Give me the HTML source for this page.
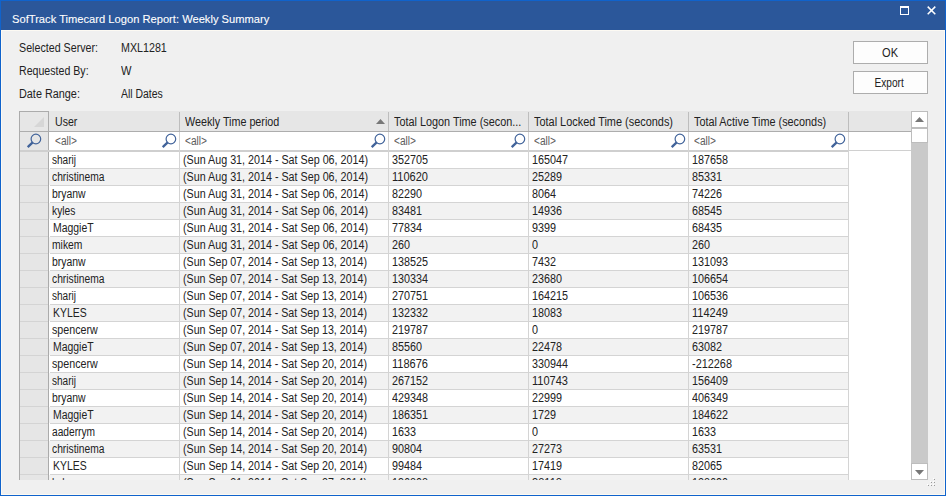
<!DOCTYPE html>
<html><head><meta charset="utf-8"><title>SofTrack Timecard Logon Report: Weekly Summary</title>
<style>
html,body{margin:0;padding:0;}
body{width:946px;height:496px;overflow:hidden;background:#f0f0f0;font-family:"Liberation Sans",sans-serif;font-size:12.5px;color:#222;position:relative;}
.abs{position:absolute;}
.t{display:inline-block;transform-origin:0 50%;white-space:nowrap;}
#frame{left:0;top:0;width:944px;height:494px;border:1px solid #1063cc;box-sizing:content-box;pointer-events:none;z-index:50;}
#inner{left:1px;top:30px;width:942px;height:463px;border:1px solid #fdfaf3;z-index:49;pointer-events:none;}
#title{left:1px;top:1px;width:944px;height:29px;background:#2b579a;}
#title .t{position:absolute;left:11px;top:10px;font-size:11.6px;color:#fff;line-height:16px;-webkit-text-stroke:0.1px #fff;}
.lbl{white-space:nowrap;line-height:14px;}
.btn{box-sizing:border-box;width:75px;height:23px;left:853px;border:1px solid #adadad;background:#fdfdfd;text-align:center;line-height:22px;}
.btn .t{transform-origin:50% 50%;}
#grid{left:19px;top:111px;width:909px;height:369px;overflow:hidden;background:#fff;}
.cell{position:absolute;white-space:nowrap;overflow:hidden;height:16px;line-height:16px;}
.cell i{position:absolute;left:3px;top:-0.5px;font-style:normal;}
.hl{position:absolute;height:1px;background:#d4d4d4;}
.vl{position:absolute;width:1px;background:#d4d4d4;}
.hdr{position:absolute;top:1.5px;height:19px;line-height:19px;white-space:nowrap;overflow:hidden;}
.flt{position:absolute;top:21px;height:18px;line-height:18px;color:#5c5c5c;}
.mag{position:absolute;width:16px;height:16px;}
</style></head><body>
<div id="title" class="abs"><span class="t" style="transform:scaleX(0.9624)">SofTrack Timecard Logon Report: Weekly Summary</span>
<div class="abs" style="left:899px;top:5px;width:9px;height:9px;box-sizing:border-box;border:1px solid #fff;border-top-width:2px;"></div>
<svg class="abs" style="left:926px;top:5px" width="10" height="10" viewBox="0 0 10 10"><path d="M0.7 0.6 L8.3 8.2 M8.3 0.6 L0.7 8.2" stroke="#fff" stroke-width="1.5" fill="none"/></svg>
</div>
<div class="abs lbl" style="left:19px;top:41px"><span class="t" style="transform:scaleX(0.8549)">Selected Server:</span></div>
<div class="abs lbl" style="left:121px;top:41px"><span class="t" style="transform:scaleX(0.8559)">MXL1281</span></div>
<div class="abs lbl" style="left:19px;top:64px"><span class="t" style="transform:scaleX(0.8488)">Requested By:</span></div>
<div class="abs lbl" style="left:121px;top:64px"><span class="t" style="transform:scaleX(0.89)">W</span></div>
<div class="abs lbl" style="left:19px;top:87px"><span class="t" style="transform:scaleX(0.8677)">Date Range:</span></div>
<div class="abs lbl" style="left:121px;top:87px"><span class="t" style="transform:scaleX(0.8357)">All Dates</span></div>
<div class="abs btn" style="top:41px"><span class="t" style="transform:scaleX(0.8859)">OK</span></div>
<div class="abs btn" style="top:71px;text-indent:-1px"><span class="t" style="transform:scaleX(0.8082)">Export</span></div>

<div id="grid" class="abs">
<div class="abs" style="left:0;top:0;width:892px;height:20px;background:#e6e6e6;"></div>
<div class="abs" style="left:0;top:0;width:30px;height:369px;background:#e6e6e6;"></div>
<div class="abs" style="left:0;top:0;width:30px;height:1px;background:#ababab;"></div>
<div class="abs" style="left:0;top:0;width:1px;height:369px;background:#ababab;"></div>
<div class="abs" style="left:29px;top:0;width:1px;height:369px;background:#ababab;"></div>
<svg class="abs" style="left:15px;top:6px" width="11" height="11" viewBox="0 0 11 11"><path d="M10 0 L10 10 L0 10 Z" fill="#d6d6d6"/></svg>
<div class="abs" style="left:0;top:20px;width:892px;height:1px;background:#adadad;"></div>
<div class="abs" style="left:30px;top:21px;width:862px;height:18px;background:#fff;"></div>
<div class="abs" style="left:1px;top:39px;width:829px;height:2px;background:#cfcfcf;"></div>
<div class="abs" style="left:830px;top:39px;width:62px;height:1px;background:#d0d0d0;"></div>
<div class="hdr" style="left:36px;width:122px"><span class="t" style="transform:scaleX(0.8449)">User</span></div>
<div class="flt" style="left:36px"><span class="t" style="transform:scaleX(0.8116)">&lt;all&gt;</span></div>
<div class="hdr" style="left:166px;width:200px"><span class="t" style="transform:scaleX(0.8609)">Weekly Time period</span></div>
<div class="flt" style="left:166px"><span class="t" style="transform:scaleX(0.8116)">&lt;all&gt;</span></div>
<div class="hdr" style="left:375px;width:131px"><span class="t" style="transform:scaleX(0.8683)">Total Logon Time (secon...</span></div>
<div class="flt" style="left:375px"><span class="t" style="transform:scaleX(0.8116)">&lt;all&gt;</span></div>
<div class="hdr" style="left:515px;width:151px"><span class="t" style="transform:scaleX(0.8736)">Total Locked Time (seconds)</span></div>
<div class="flt" style="left:515px"><span class="t" style="transform:scaleX(0.8116)">&lt;all&gt;</span></div>
<div class="hdr" style="left:675px;width:151px"><span class="t" style="transform:scaleX(0.8689)">Total Active Time (seconds)</span></div>
<div class="flt" style="left:675px"><span class="t" style="transform:scaleX(0.8116)">&lt;all&gt;</span></div>
<svg class="abs" style="left:357px;top:8px" width="9" height="5" viewBox="0 0 9 5"><path d="M0 5 L4.5 0 L9 5 Z" fill="#777"/></svg>
<svg class="mag" style="left:7px;top:22px" viewBox="0 0 16 16"><circle cx="9.9" cy="6" r="4.8" fill="none" stroke="#41639a" stroke-width="1.2"/><path d="M6.7 9.3 L1.7 14.1" stroke="#41639a" stroke-width="2.3" stroke-linecap="butt"/></svg>
<svg class="mag" style="left:142px;top:22px" viewBox="0 0 16 16"><circle cx="9.9" cy="6" r="4.8" fill="none" stroke="#41639a" stroke-width="1.2"/><path d="M6.7 9.3 L1.7 14.1" stroke="#41639a" stroke-width="2.3" stroke-linecap="butt"/></svg>
<svg class="mag" style="left:351px;top:22px" viewBox="0 0 16 16"><circle cx="9.9" cy="6" r="4.8" fill="none" stroke="#41639a" stroke-width="1.2"/><path d="M6.7 9.3 L1.7 14.1" stroke="#41639a" stroke-width="2.3" stroke-linecap="butt"/></svg>
<svg class="mag" style="left:491px;top:22px" viewBox="0 0 16 16"><circle cx="9.9" cy="6" r="4.8" fill="none" stroke="#41639a" stroke-width="1.2"/><path d="M6.7 9.3 L1.7 14.1" stroke="#41639a" stroke-width="2.3" stroke-linecap="butt"/></svg>
<svg class="mag" style="left:651px;top:22px" viewBox="0 0 16 16"><circle cx="9.9" cy="6" r="4.8" fill="none" stroke="#41639a" stroke-width="1.2"/><path d="M6.7 9.3 L1.7 14.1" stroke="#41639a" stroke-width="2.3" stroke-linecap="butt"/></svg>
<svg class="mag" style="left:811px;top:22px" viewBox="0 0 16 16"><circle cx="9.9" cy="6" r="4.8" fill="none" stroke="#41639a" stroke-width="1.2"/><path d="M6.7 9.3 L1.7 14.1" stroke="#41639a" stroke-width="2.3" stroke-linecap="butt"/></svg>
<div class="abs" style="left:30px;top:41px;width:800px;height:16px;background:#fff;"></div>
<div class="cell" style="left:30px;top:41px;width:130px"><i style="left:3.3px"><span class="t" style="transform:scaleX(0.8034)">sharij</span></i></div>
<div class="cell" style="left:161px;top:41px;width:208px"><i><span class="t" style="transform:scaleX(0.8587)">(Sun Aug 31, 2014 - Sat Sep 06, 2014)</span></i></div>
<div class="cell" style="left:370px;top:41px;width:139px"><i><span class="t" style="transform:scaleX(0.863)">352705</span></i></div>
<div class="cell" style="left:510px;top:41px;width:159px"><i><span class="t" style="transform:scaleX(0.863)">165047</span></i></div>
<div class="cell" style="left:670px;top:41px;width:159px"><i><span class="t" style="transform:scaleX(0.863)">187658</span></i></div>
<div class="hl" style="left:1px;top:57px;width:28px;"></div><div class="hl" style="left:31px;top:57px;width:799px;"></div>
<div class="abs" style="left:30px;top:58px;width:800px;height:16px;background:#f2f2f2;"></div>
<div class="cell" style="left:30px;top:58px;width:130px"><i style="left:3.3px"><span class="t" style="transform:scaleX(0.8214)">christinema</span></i></div>
<div class="cell" style="left:161px;top:58px;width:208px"><i><span class="t" style="transform:scaleX(0.8587)">(Sun Aug 31, 2014 - Sat Sep 06, 2014)</span></i></div>
<div class="cell" style="left:370px;top:58px;width:139px"><i><span class="t" style="transform:scaleX(0.8827)">110620</span></i></div>
<div class="cell" style="left:510px;top:58px;width:159px"><i><span class="t" style="transform:scaleX(0.863)">25289</span></i></div>
<div class="cell" style="left:670px;top:58px;width:159px"><i><span class="t" style="transform:scaleX(0.863)">85331</span></i></div>
<div class="hl" style="left:1px;top:74px;width:28px;"></div><div class="hl" style="left:31px;top:74px;width:799px;"></div>
<div class="abs" style="left:30px;top:75px;width:800px;height:16px;background:#fff;"></div>
<div class="cell" style="left:30px;top:75px;width:130px"><i style="left:3.3px"><span class="t" style="transform:scaleX(0.8338)">bryanw</span></i></div>
<div class="cell" style="left:161px;top:75px;width:208px"><i><span class="t" style="transform:scaleX(0.8587)">(Sun Aug 31, 2014 - Sat Sep 06, 2014)</span></i></div>
<div class="cell" style="left:370px;top:75px;width:139px"><i><span class="t" style="transform:scaleX(0.863)">82290</span></i></div>
<div class="cell" style="left:510px;top:75px;width:159px"><i><span class="t" style="transform:scaleX(0.863)">8064</span></i></div>
<div class="cell" style="left:670px;top:75px;width:159px"><i><span class="t" style="transform:scaleX(0.863)">74226</span></i></div>
<div class="hl" style="left:1px;top:91px;width:28px;"></div><div class="hl" style="left:31px;top:91px;width:799px;"></div>
<div class="abs" style="left:30px;top:92px;width:800px;height:16px;background:#f2f2f2;"></div>
<div class="cell" style="left:30px;top:92px;width:130px"><i style="left:3.3px"><span class="t" style="transform:scaleX(0.8216)">kyles</span></i></div>
<div class="cell" style="left:161px;top:92px;width:208px"><i><span class="t" style="transform:scaleX(0.8587)">(Sun Aug 31, 2014 - Sat Sep 06, 2014)</span></i></div>
<div class="cell" style="left:370px;top:92px;width:139px"><i><span class="t" style="transform:scaleX(0.863)">83481</span></i></div>
<div class="cell" style="left:510px;top:92px;width:159px"><i><span class="t" style="transform:scaleX(0.863)">14936</span></i></div>
<div class="cell" style="left:670px;top:92px;width:159px"><i><span class="t" style="transform:scaleX(0.863)">68545</span></i></div>
<div class="hl" style="left:1px;top:108px;width:28px;"></div><div class="hl" style="left:31px;top:108px;width:799px;"></div>
<div class="abs" style="left:30px;top:109px;width:800px;height:16px;background:#fff;"></div>
<div class="cell" style="left:30px;top:109px;width:130px"><i style="left:4.3px"><span class="t" style="transform:scaleX(0.8348)">MaggieT</span></i></div>
<div class="cell" style="left:161px;top:109px;width:208px"><i><span class="t" style="transform:scaleX(0.8587)">(Sun Aug 31, 2014 - Sat Sep 06, 2014)</span></i></div>
<div class="cell" style="left:370px;top:109px;width:139px"><i><span class="t" style="transform:scaleX(0.863)">77834</span></i></div>
<div class="cell" style="left:510px;top:109px;width:159px"><i><span class="t" style="transform:scaleX(0.863)">9399</span></i></div>
<div class="cell" style="left:670px;top:109px;width:159px"><i><span class="t" style="transform:scaleX(0.863)">68435</span></i></div>
<div class="hl" style="left:1px;top:125px;width:28px;"></div><div class="hl" style="left:31px;top:125px;width:799px;"></div>
<div class="abs" style="left:30px;top:126px;width:800px;height:16px;background:#f2f2f2;"></div>
<div class="cell" style="left:30px;top:126px;width:130px"><i style="left:3.3px"><span class="t" style="transform:scaleX(0.826)">mikem</span></i></div>
<div class="cell" style="left:161px;top:126px;width:208px"><i><span class="t" style="transform:scaleX(0.8587)">(Sun Aug 31, 2014 - Sat Sep 06, 2014)</span></i></div>
<div class="cell" style="left:370px;top:126px;width:139px"><i><span class="t" style="transform:scaleX(0.863)">260</span></i></div>
<div class="cell" style="left:510px;top:126px;width:159px"><i><span class="t" style="transform:scaleX(0.863)">0</span></i></div>
<div class="cell" style="left:670px;top:126px;width:159px"><i><span class="t" style="transform:scaleX(0.863)">260</span></i></div>
<div class="hl" style="left:1px;top:142px;width:28px;"></div><div class="hl" style="left:31px;top:142px;width:799px;"></div>
<div class="abs" style="left:30px;top:143px;width:800px;height:16px;background:#fff;"></div>
<div class="cell" style="left:30px;top:143px;width:130px"><i style="left:3.3px"><span class="t" style="transform:scaleX(0.8338)">bryanw</span></i></div>
<div class="cell" style="left:161px;top:143px;width:208px"><i><span class="t" style="transform:scaleX(0.8513)">(Sun Sep 07, 2014 - Sat Sep 13, 2014)</span></i></div>
<div class="cell" style="left:370px;top:143px;width:139px"><i><span class="t" style="transform:scaleX(0.863)">138525</span></i></div>
<div class="cell" style="left:510px;top:143px;width:159px"><i><span class="t" style="transform:scaleX(0.863)">7432</span></i></div>
<div class="cell" style="left:670px;top:143px;width:159px"><i><span class="t" style="transform:scaleX(0.863)">131093</span></i></div>
<div class="hl" style="left:1px;top:159px;width:28px;"></div><div class="hl" style="left:31px;top:159px;width:799px;"></div>
<div class="abs" style="left:30px;top:160px;width:800px;height:16px;background:#f2f2f2;"></div>
<div class="cell" style="left:30px;top:160px;width:130px"><i style="left:3.3px"><span class="t" style="transform:scaleX(0.8214)">christinema</span></i></div>
<div class="cell" style="left:161px;top:160px;width:208px"><i><span class="t" style="transform:scaleX(0.8513)">(Sun Sep 07, 2014 - Sat Sep 13, 2014)</span></i></div>
<div class="cell" style="left:370px;top:160px;width:139px"><i><span class="t" style="transform:scaleX(0.863)">130334</span></i></div>
<div class="cell" style="left:510px;top:160px;width:159px"><i><span class="t" style="transform:scaleX(0.863)">23680</span></i></div>
<div class="cell" style="left:670px;top:160px;width:159px"><i><span class="t" style="transform:scaleX(0.863)">106654</span></i></div>
<div class="hl" style="left:1px;top:176px;width:28px;"></div><div class="hl" style="left:31px;top:176px;width:799px;"></div>
<div class="abs" style="left:30px;top:177px;width:800px;height:16px;background:#fff;"></div>
<div class="cell" style="left:30px;top:177px;width:130px"><i style="left:3.3px"><span class="t" style="transform:scaleX(0.8034)">sharij</span></i></div>
<div class="cell" style="left:161px;top:177px;width:208px"><i><span class="t" style="transform:scaleX(0.8513)">(Sun Sep 07, 2014 - Sat Sep 13, 2014)</span></i></div>
<div class="cell" style="left:370px;top:177px;width:139px"><i><span class="t" style="transform:scaleX(0.863)">270751</span></i></div>
<div class="cell" style="left:510px;top:177px;width:159px"><i><span class="t" style="transform:scaleX(0.863)">164215</span></i></div>
<div class="cell" style="left:670px;top:177px;width:159px"><i><span class="t" style="transform:scaleX(0.863)">106536</span></i></div>
<div class="hl" style="left:1px;top:193px;width:28px;"></div><div class="hl" style="left:31px;top:193px;width:799px;"></div>
<div class="abs" style="left:30px;top:194px;width:800px;height:16px;background:#f2f2f2;"></div>
<div class="cell" style="left:30px;top:194px;width:130px"><i style="left:4.3px"><span class="t" style="transform:scaleX(0.8337)">KYLES</span></i></div>
<div class="cell" style="left:161px;top:194px;width:208px"><i><span class="t" style="transform:scaleX(0.8513)">(Sun Sep 07, 2014 - Sat Sep 13, 2014)</span></i></div>
<div class="cell" style="left:370px;top:194px;width:139px"><i><span class="t" style="transform:scaleX(0.863)">132332</span></i></div>
<div class="cell" style="left:510px;top:194px;width:159px"><i><span class="t" style="transform:scaleX(0.863)">18083</span></i></div>
<div class="cell" style="left:670px;top:194px;width:159px"><i><span class="t" style="transform:scaleX(0.8827)">114249</span></i></div>
<div class="hl" style="left:1px;top:210px;width:28px;"></div><div class="hl" style="left:31px;top:210px;width:799px;"></div>
<div class="abs" style="left:30px;top:211px;width:800px;height:16px;background:#fff;"></div>
<div class="cell" style="left:30px;top:211px;width:130px"><i style="left:3.3px"><span class="t" style="transform:scaleX(0.8542)">spencerw</span></i></div>
<div class="cell" style="left:161px;top:211px;width:208px"><i><span class="t" style="transform:scaleX(0.8513)">(Sun Sep 07, 2014 - Sat Sep 13, 2014)</span></i></div>
<div class="cell" style="left:370px;top:211px;width:139px"><i><span class="t" style="transform:scaleX(0.863)">219787</span></i></div>
<div class="cell" style="left:510px;top:211px;width:159px"><i><span class="t" style="transform:scaleX(0.863)">0</span></i></div>
<div class="cell" style="left:670px;top:211px;width:159px"><i><span class="t" style="transform:scaleX(0.863)">219787</span></i></div>
<div class="hl" style="left:1px;top:227px;width:28px;"></div><div class="hl" style="left:31px;top:227px;width:799px;"></div>
<div class="abs" style="left:30px;top:228px;width:800px;height:16px;background:#f2f2f2;"></div>
<div class="cell" style="left:30px;top:228px;width:130px"><i style="left:4.3px"><span class="t" style="transform:scaleX(0.8348)">MaggieT</span></i></div>
<div class="cell" style="left:161px;top:228px;width:208px"><i><span class="t" style="transform:scaleX(0.8513)">(Sun Sep 07, 2014 - Sat Sep 13, 2014)</span></i></div>
<div class="cell" style="left:370px;top:228px;width:139px"><i><span class="t" style="transform:scaleX(0.863)">85560</span></i></div>
<div class="cell" style="left:510px;top:228px;width:159px"><i><span class="t" style="transform:scaleX(0.863)">22478</span></i></div>
<div class="cell" style="left:670px;top:228px;width:159px"><i><span class="t" style="transform:scaleX(0.863)">63082</span></i></div>
<div class="hl" style="left:1px;top:244px;width:28px;"></div><div class="hl" style="left:31px;top:244px;width:799px;"></div>
<div class="abs" style="left:30px;top:245px;width:800px;height:16px;background:#fff;"></div>
<div class="cell" style="left:30px;top:245px;width:130px"><i style="left:3.3px"><span class="t" style="transform:scaleX(0.8542)">spencerw</span></i></div>
<div class="cell" style="left:161px;top:245px;width:208px"><i><span class="t" style="transform:scaleX(0.8513)">(Sun Sep 14, 2014 - Sat Sep 20, 2014)</span></i></div>
<div class="cell" style="left:370px;top:245px;width:139px"><i><span class="t" style="transform:scaleX(0.8827)">118676</span></i></div>
<div class="cell" style="left:510px;top:245px;width:159px"><i><span class="t" style="transform:scaleX(0.863)">330944</span></i></div>
<div class="cell" style="left:670px;top:245px;width:159px"><i><span class="t" style="transform:scaleX(0.8719)">-212268</span></i></div>
<div class="hl" style="left:1px;top:261px;width:28px;"></div><div class="hl" style="left:31px;top:261px;width:799px;"></div>
<div class="abs" style="left:30px;top:262px;width:800px;height:16px;background:#f2f2f2;"></div>
<div class="cell" style="left:30px;top:262px;width:130px"><i style="left:3.3px"><span class="t" style="transform:scaleX(0.8034)">sharij</span></i></div>
<div class="cell" style="left:161px;top:262px;width:208px"><i><span class="t" style="transform:scaleX(0.8513)">(Sun Sep 14, 2014 - Sat Sep 20, 2014)</span></i></div>
<div class="cell" style="left:370px;top:262px;width:139px"><i><span class="t" style="transform:scaleX(0.863)">267152</span></i></div>
<div class="cell" style="left:510px;top:262px;width:159px"><i><span class="t" style="transform:scaleX(0.8827)">110743</span></i></div>
<div class="cell" style="left:670px;top:262px;width:159px"><i><span class="t" style="transform:scaleX(0.863)">156409</span></i></div>
<div class="hl" style="left:1px;top:278px;width:28px;"></div><div class="hl" style="left:31px;top:278px;width:799px;"></div>
<div class="abs" style="left:30px;top:279px;width:800px;height:16px;background:#fff;"></div>
<div class="cell" style="left:30px;top:279px;width:130px"><i style="left:3.3px"><span class="t" style="transform:scaleX(0.8338)">bryanw</span></i></div>
<div class="cell" style="left:161px;top:279px;width:208px"><i><span class="t" style="transform:scaleX(0.8513)">(Sun Sep 14, 2014 - Sat Sep 20, 2014)</span></i></div>
<div class="cell" style="left:370px;top:279px;width:139px"><i><span class="t" style="transform:scaleX(0.863)">429348</span></i></div>
<div class="cell" style="left:510px;top:279px;width:159px"><i><span class="t" style="transform:scaleX(0.863)">22999</span></i></div>
<div class="cell" style="left:670px;top:279px;width:159px"><i><span class="t" style="transform:scaleX(0.863)">406349</span></i></div>
<div class="hl" style="left:1px;top:295px;width:28px;"></div><div class="hl" style="left:31px;top:295px;width:799px;"></div>
<div class="abs" style="left:30px;top:296px;width:800px;height:16px;background:#f2f2f2;"></div>
<div class="cell" style="left:30px;top:296px;width:130px"><i style="left:4.3px"><span class="t" style="transform:scaleX(0.8348)">MaggieT</span></i></div>
<div class="cell" style="left:161px;top:296px;width:208px"><i><span class="t" style="transform:scaleX(0.8513)">(Sun Sep 14, 2014 - Sat Sep 20, 2014)</span></i></div>
<div class="cell" style="left:370px;top:296px;width:139px"><i><span class="t" style="transform:scaleX(0.863)">186351</span></i></div>
<div class="cell" style="left:510px;top:296px;width:159px"><i><span class="t" style="transform:scaleX(0.863)">1729</span></i></div>
<div class="cell" style="left:670px;top:296px;width:159px"><i><span class="t" style="transform:scaleX(0.863)">184622</span></i></div>
<div class="hl" style="left:1px;top:312px;width:28px;"></div><div class="hl" style="left:31px;top:312px;width:799px;"></div>
<div class="abs" style="left:30px;top:313px;width:800px;height:16px;background:#fff;"></div>
<div class="cell" style="left:30px;top:313px;width:130px"><i style="left:3.3px"><span class="t" style="transform:scaleX(0.8144)">aaderrym</span></i></div>
<div class="cell" style="left:161px;top:313px;width:208px"><i><span class="t" style="transform:scaleX(0.8513)">(Sun Sep 14, 2014 - Sat Sep 20, 2014)</span></i></div>
<div class="cell" style="left:370px;top:313px;width:139px"><i><span class="t" style="transform:scaleX(0.863)">1633</span></i></div>
<div class="cell" style="left:510px;top:313px;width:159px"><i><span class="t" style="transform:scaleX(0.863)">0</span></i></div>
<div class="cell" style="left:670px;top:313px;width:159px"><i><span class="t" style="transform:scaleX(0.863)">1633</span></i></div>
<div class="hl" style="left:1px;top:329px;width:28px;"></div><div class="hl" style="left:31px;top:329px;width:799px;"></div>
<div class="abs" style="left:30px;top:330px;width:800px;height:16px;background:#f2f2f2;"></div>
<div class="cell" style="left:30px;top:330px;width:130px"><i style="left:3.3px"><span class="t" style="transform:scaleX(0.8214)">christinema</span></i></div>
<div class="cell" style="left:161px;top:330px;width:208px"><i><span class="t" style="transform:scaleX(0.8513)">(Sun Sep 14, 2014 - Sat Sep 20, 2014)</span></i></div>
<div class="cell" style="left:370px;top:330px;width:139px"><i><span class="t" style="transform:scaleX(0.863)">90804</span></i></div>
<div class="cell" style="left:510px;top:330px;width:159px"><i><span class="t" style="transform:scaleX(0.863)">27273</span></i></div>
<div class="cell" style="left:670px;top:330px;width:159px"><i><span class="t" style="transform:scaleX(0.863)">63531</span></i></div>
<div class="hl" style="left:1px;top:346px;width:28px;"></div><div class="hl" style="left:31px;top:346px;width:799px;"></div>
<div class="abs" style="left:30px;top:347px;width:800px;height:16px;background:#fff;"></div>
<div class="cell" style="left:30px;top:347px;width:130px"><i style="left:4.3px"><span class="t" style="transform:scaleX(0.8337)">KYLES</span></i></div>
<div class="cell" style="left:161px;top:347px;width:208px"><i><span class="t" style="transform:scaleX(0.8513)">(Sun Sep 14, 2014 - Sat Sep 20, 2014)</span></i></div>
<div class="cell" style="left:370px;top:347px;width:139px"><i><span class="t" style="transform:scaleX(0.863)">99484</span></i></div>
<div class="cell" style="left:510px;top:347px;width:159px"><i><span class="t" style="transform:scaleX(0.863)">17419</span></i></div>
<div class="cell" style="left:670px;top:347px;width:159px"><i><span class="t" style="transform:scaleX(0.863)">82065</span></i></div>
<div class="hl" style="left:1px;top:363px;width:28px;"></div><div class="hl" style="left:31px;top:363px;width:799px;"></div>
<div class="abs" style="left:30px;top:364px;width:800px;height:16px;background:#f2f2f2;"></div>
<div class="cell" style="left:30px;top:364px;width:130px"><i style="left:3.3px"><span class="t" style="transform:scaleX(0.8216)">kyles</span></i></div>
<div class="cell" style="left:161px;top:364px;width:208px"><i><span class="t" style="transform:scaleX(0.8513)">(Sun Sep 21, 2014 - Sat Sep 27, 2014)</span></i></div>
<div class="cell" style="left:370px;top:364px;width:139px"><i><span class="t" style="transform:scaleX(0.863)">136808</span></i></div>
<div class="cell" style="left:510px;top:364px;width:159px"><i><span class="t" style="transform:scaleX(0.8867)">38118</span></i></div>
<div class="cell" style="left:670px;top:364px;width:159px"><i><span class="t" style="transform:scaleX(0.863)">128690</span></i></div>
<div class="hl" style="left:1px;top:380px;width:28px;"></div><div class="hl" style="left:31px;top:380px;width:799px;"></div>
<div class="vl" style="left:160px;top:21px;height:348px;"></div>
<div class="abs" style="left:160px;top:1px;width:1px;height:19px;background:#bdbdbd;"></div>
<div class="vl" style="left:369px;top:21px;height:348px;"></div>
<div class="abs" style="left:369px;top:1px;width:1px;height:19px;background:#bdbdbd;"></div>
<div class="vl" style="left:509px;top:21px;height:348px;"></div>
<div class="abs" style="left:509px;top:1px;width:1px;height:19px;background:#bdbdbd;"></div>
<div class="vl" style="left:669px;top:21px;height:348px;"></div>
<div class="abs" style="left:669px;top:1px;width:1px;height:19px;background:#bdbdbd;"></div>
<div class="vl" style="left:829px;top:21px;height:348px;"></div>
<div class="abs" style="left:829px;top:1px;width:1px;height:19px;background:#bdbdbd;"></div>
<div class="abs" style="left:892px;top:0;width:17px;height:369px;background:#c9c9c9;"></div>
<div class="abs" style="left:892px;top:0;width:17px;height:17px;box-sizing:border-box;border:1px solid #bdbdbd;background:#fff;"></div>
<div class="abs" style="left:892px;top:17px;width:17px;height:15px;box-sizing:border-box;border:1px solid #bdbdbd;background:#fff;"></div>
<div class="abs" style="left:892px;top:352px;width:17px;height:17px;box-sizing:border-box;border:1px solid #bdbdbd;background:#fff;"></div>
<svg class="abs" style="left:896px;top:6px" width="9" height="5" viewBox="0 0 9 5"><path d="M0 5 L4.5 0 L9 5 Z" fill="#777"/></svg>
<svg class="abs" style="left:896px;top:359px" width="9" height="5" viewBox="0 0 9 5"><path d="M0 0 L4.5 5 L9 0 Z" fill="#777"/></svg>
</div>
<div class="abs" style="left:933px;top:478px;width:1px;height:1px;background:#fff;"></div><div class="abs" style="left:934px;top:479px;width:1px;height:1px;background:#9a9a9a;"></div>
<div class="abs" style="left:930px;top:481px;width:1px;height:1px;background:#fff;"></div><div class="abs" style="left:931px;top:482px;width:1px;height:1px;background:#9a9a9a;"></div>
<div class="abs" style="left:933px;top:481px;width:1px;height:1px;background:#fff;"></div><div class="abs" style="left:934px;top:482px;width:1px;height:1px;background:#9a9a9a;"></div>
<div class="abs" style="left:927px;top:484px;width:1px;height:1px;background:#fff;"></div><div class="abs" style="left:928px;top:485px;width:1px;height:1px;background:#9a9a9a;"></div>
<div class="abs" style="left:930px;top:484px;width:1px;height:1px;background:#fff;"></div><div class="abs" style="left:931px;top:485px;width:1px;height:1px;background:#9a9a9a;"></div>
<div class="abs" style="left:933px;top:484px;width:1px;height:1px;background:#fff;"></div><div class="abs" style="left:934px;top:485px;width:1px;height:1px;background:#9a9a9a;"></div>
<div id="inner" class="abs"></div><div id="frame" class="abs"></div>
</body></html>
